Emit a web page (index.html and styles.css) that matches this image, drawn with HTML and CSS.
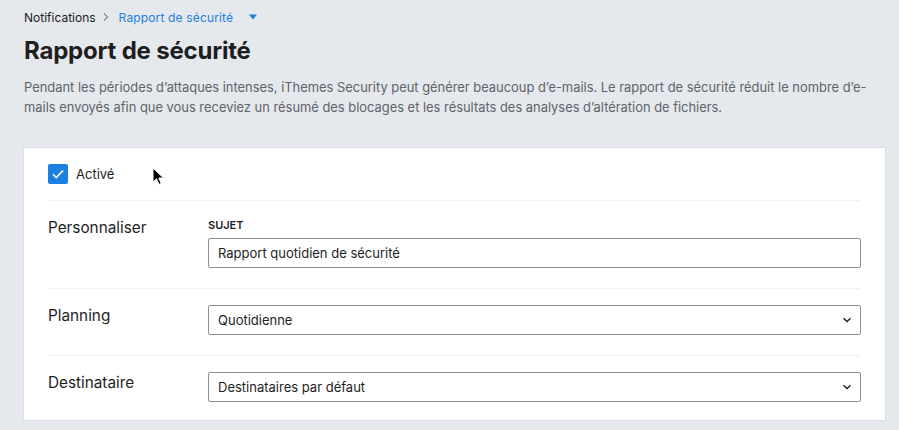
FILE: index.html
```html
<!DOCTYPE html>
<html>

<head>
    <title>Rapport de sécurité</title>
    <link rel="stylesheet" href="styles.css">
</head>

<body>
    <div class="page">
        <nav class="breadcrumb">
            <span class="crumb">Notifications</span>
            <svg class="crumb-sep" width="8" height="10" viewBox="0 0 8 10">
                <path d="M2 1.5 L5.5 5 L2 8.5" fill="none" stroke="#8a8f96" stroke-width="1.3" />
            </svg>
            <span class="crumb current">Rapport de sécurité</span>
            <svg class="crumb-caret" width="10" height="8" viewBox="0 0 10 8">
                <path d="M1 1.5 H9 L5 6.5 Z" fill="#1d7fe0" />
            </svg>
        </nav>

        <h1>Rapport de sécurité</h1>

        <p class="intro">Pendant les périodes d’attaques intenses, iThemes Security peut générer beaucoup d’e-mails. Le rapport de sécurité réduit le nombre d’e-mails envoyés afin que vous receviez un résumé des blocages et les résultats des analyses d’altération de fichiers.</p>

        <div class="card">
            <div class="toggle-row">
                <label class="checkbox">
                    <span class="box">
                        <svg width="14" height="12" viewBox="0 0 14 12">
                            <path d="M2 6.2 L5.3 9.5 L12 2.5" fill="none" stroke="#fff" stroke-width="1.6" />
                        </svg>
                    </span>
                    Activé
                </label>
                <!-- mouse pointer -->
                <svg class="pointer" width="14" height="20" viewBox="0 0 14 20">
                    <path d="M1 1 L1 15 L4.5 11.8 L7 17.5 L9.2 16.5 L6.8 11 L11.5 11 Z" fill="#000" stroke="#fff" stroke-width="1" />
                </svg>
            </div>

            <div class="row">
                <div class="row-label">Personnaliser</div>
                <div class="row-field">
                    <div class="field-label">SUJET</div>
                    <input class="text-input" type="text" value="Rapport quotidien de sécurité">
                </div>
            </div>

            <div class="row">
                <div class="row-label">Planning</div>
                <div class="row-field">
                    <div class="select">
                        <span>Quotidienne</span>
                        <svg width="10" height="6" viewBox="0 0 10 6">
                            <path d="M1.5 1.2 L5 4.5 L8.5 1.2" fill="none" stroke="#1e1e1e" stroke-width="1.4" />
                        </svg>
                    </div>
                </div>
            </div>

            <div class="row last">
                <div class="row-label">Destinataire</div>
                <div class="row-field">
                    <div class="select">
                        <span>Destinataires par défaut</span>
                        <svg width="10" height="6" viewBox="0 0 10 6">
                            <path d="M1.5 1.2 L5 4.5 L8.5 1.2" fill="none" stroke="#1e1e1e" stroke-width="1.4" />
                        </svg>
                    </div>
                </div>
            </div>
        </div>
    </div>
</body>

</html>
```

FILE: styles.css
```css
body {
    background-color: #e5e8ec;
    font-family: Inter, "Noto Sans", sans-serif;
    color: #1e1e1e;
    margin: 0;
    padding: 0;
}

.page {
    padding: 9px 13px 0 24px;
}

.breadcrumb {
    display: flex;
    align-items: center;
    height: 16px;
    font-size: 12px;
}

.crumb-sep {
    margin: 0 9px 0 6px;
}

.crumb.current {
    color: #1d7fe0;
    letter-spacing: 0.15px;
}

.crumb-caret {
    margin-left: 15px;
}

h1 {
    font-size: 24px;
    font-weight: 700;
    line-height: 30px;
    margin: 11px 0 0;
    letter-spacing: -0.2px;
}

.intro {
    font-size: 12.9px;
    line-height: 19.5px;
    color: #5f646b;
    margin: 12px 10px 0 0;
}

.card {
    background-color: #fff;
    border: 1px solid #dcdee2;
    margin: 30px 0 0 -1px;
    padding: 0 24px;
}

.toggle-row {
    position: relative;
    padding: 16px 0;
}

.checkbox {
    display: flex;
    align-items: center;
    font-size: 13px;
}

.box {
    display: flex;
    align-items: center;
    justify-content: center;
    width: 20px;
    height: 20px;
    border-radius: 2px;
    background-color: #1d7fe0;
    margin-right: 8px;
}

.pointer {
    position: absolute;
    left: 104px;
    top: 19px;
}

.row {
    display: flex;
    align-items: flex-start;
    border-top: 1px solid #eff0f2;
    padding: 16px 0 20px;
}

.row.last {
    padding-bottom: 18px;
}

.row-label {
    width: 160px;
    font-size: 15.3px;
    line-height: 22px;
}

.row-field {
    flex: 1;
}

.field-label {
    font-size: 11px;
    font-weight: 600;
    line-height: 16px;
    margin-bottom: 5px;
    text-transform: uppercase;
}

.text-input,
.select {
    box-sizing: border-box;
    width: 100%;
    height: 30px;
    border: 1px solid #8c8f94;
    border-radius: 2px;
    font-family: inherit;
    font-size: 13px;
    color: #1e1e1e;
    background-color: #fff;
}

.text-input {
    display: block;
    padding: 0 9px;
    outline: none;
}

.select {
    display: flex;
    align-items: center;
    justify-content: space-between;
    padding: 0 8px 0 9px;
}
```
